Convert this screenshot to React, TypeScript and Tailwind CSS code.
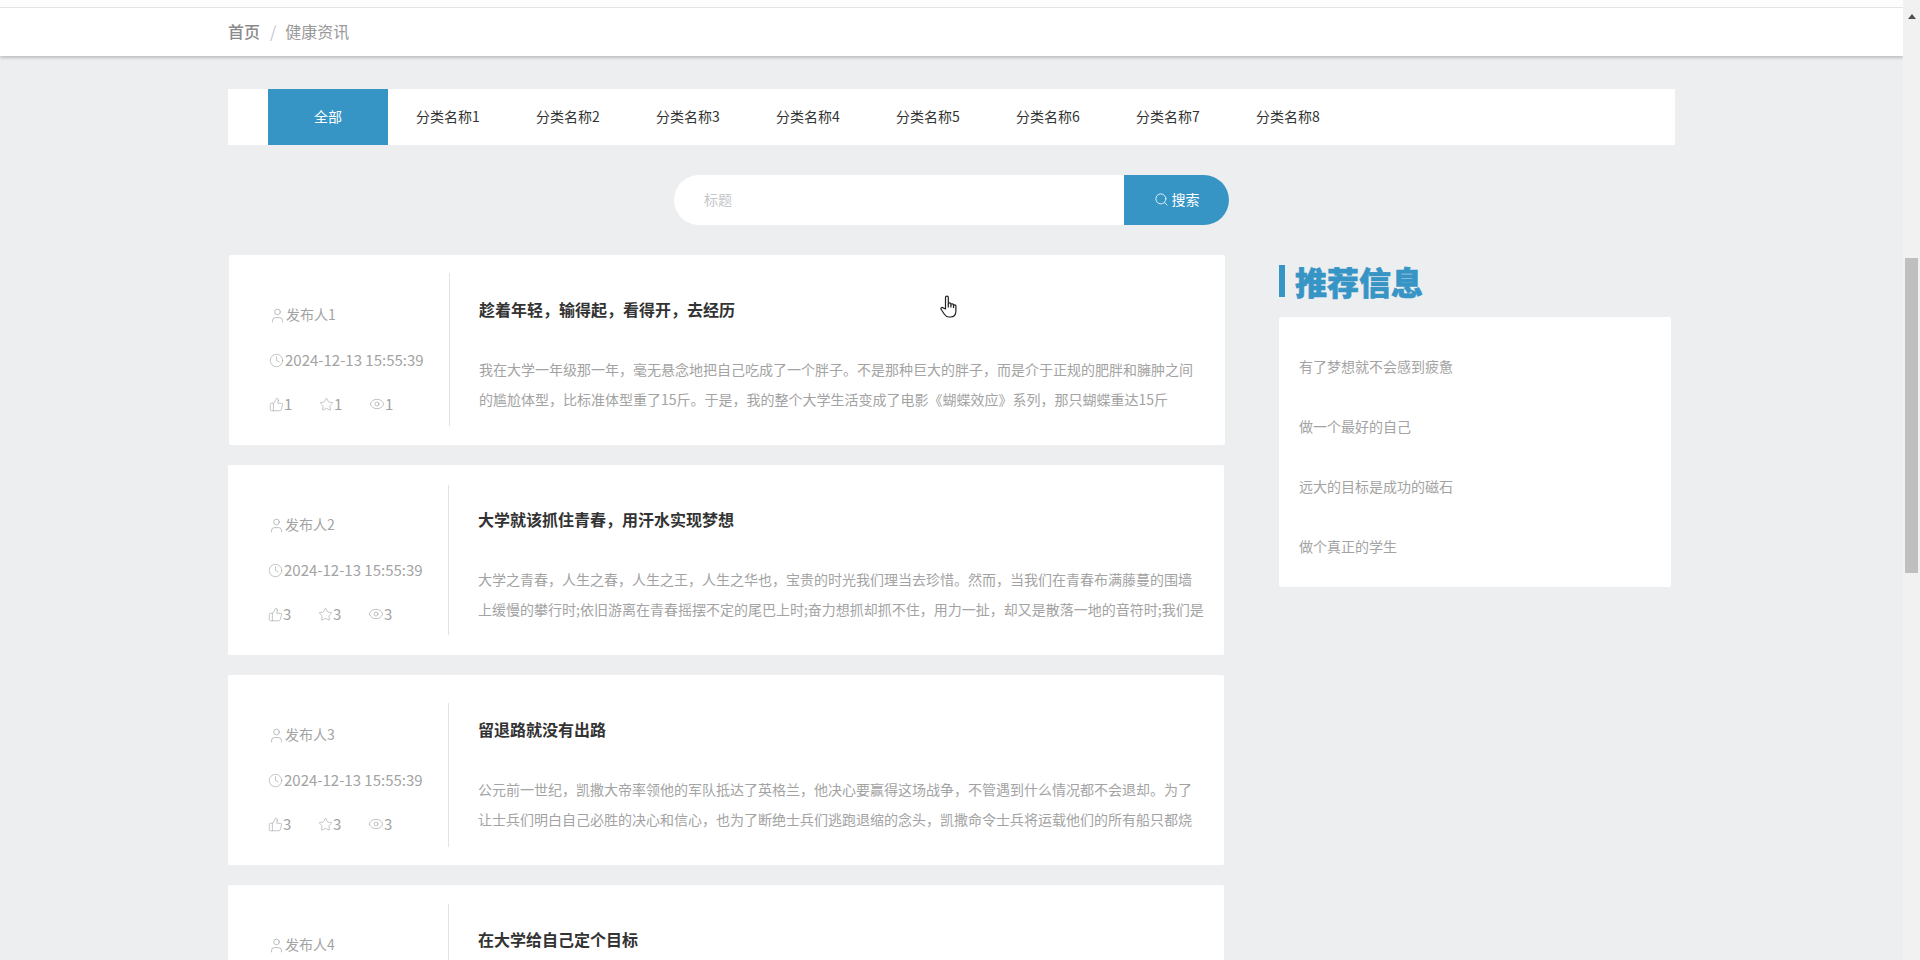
import React from "react";
import { User, Clock, ThumbsUp, Star, Eye, Search } from "lucide-react";

const tabs = ["分类名称1","分类名称2","分类名称3","分类名称4","分类名称5","分类名称6","分类名称7","分类名称8"];
const cards = [
  { n: 1, c: 1, shift: "ml-px", d: "mt-[18px] h-[153px]", t: "趁着年轻，输得起，看得开，去经历", a: "我在大学一年级那一年，毫无悬念地把自己吃成了一个胖子。不是那种巨大的胖子，而是介于正规的肥胖和臃肿之间", b: "的尴尬体型，比标准体型重了15斤。于是，我的整个大学生活变成了电影《蝴蝶效应》系列，那只蝴蝶重达15斤" },
  { n: 2, c: 3, shift: "", d: "mt-[20px] h-[150px]", t: "大学就该抓住青春，用汗水实现梦想", a: "大学之青春，人生之春，人生之王，人生之华也，宝贵的时光我们理当去珍惜。然而，当我们在青春布满藤蔓的围墙", b: "上缓慢的攀行时;依旧游离在青春摇摆不定的尾巴上时;奋力想抓却抓不住，用力一扯，却又是散落一地的音符时;我们是" },
  { n: 3, c: 3, shift: "", d: "mt-[28px] h-[144px]", t: "留退路就没有出路", a: "公元前一世纪，凯撒大帝率领他的军队抵达了英格兰，他决心要赢得这场战争，不管遇到什么情况都不会退却。为了", b: "让士兵们明白自己必胜的决心和信心，也为了断绝士兵们逃跑退缩的念头，凯撒命令士兵将运载他们的所有船只都烧" },
  { n: 4, c: 3, shift: "", d: "mt-[19px] h-[150px]", t: "在大学给自己定个目标", a: "", b: "" },
];
const side = ["有了梦想就不会感到疲惫","做一个最好的自己","远大的目标是成功的磁石","做个真正的学生"];
const font = { fontFamily: '"Noto Sans CJK SC", "Liberation Sans", sans-serif' };

function Stat({ icon, v, w }: { icon: React.ReactNode; v: number; w: string }) {
  return <span className={`flex items-center text-[15px] ${w}`}>{icon}<span>{v}</span></span>;
}

export default function App() {
  return (
    <div className="relative flex h-[960px] overflow-hidden bg-[#edeef0] text-[14px]" style={font}>
      <main className="flex-1 min-w-0">
        <div className="h-[8px] bg-[#fdfdfd] border-b border-[#e6e6e6]" />
        <div className="h-[48px] bg-white shadow-[0_2px_3px_rgba(0,0,0,0.2)] flex items-center pl-[228px] pb-[2px] text-[16px] leading-none">
          <span className="font-medium text-[#8a8a8a]">首页</span>
          <span className="ml-[10px] mr-[9px] text-[#c0c4cc]">/</span>
          <span className="text-[#999]">健康资讯</span>
        </div>
        <div className="mx-[228px] w-[1447px] mt-[33px] h-[56px] bg-white pl-[40px] flex">
          <div className="w-[120px] bg-[#3795c5] text-white flex items-center justify-center pb-[2px]">全部</div>
          {tabs.map(t => <div key={t} className="w-[120px] flex items-center justify-center text-[#333] pb-[2px]">{t}</div>)}
        </div>
        <div className="mt-[30px] ml-[674px] w-[555px] h-[50px] flex rounded-[25px] overflow-hidden bg-white">
          <div className="flex-1 pl-[30px] pb-[2px] flex items-center text-[#c4c6cb]">标题</div>
          <div className="w-[105px] bg-[#3795c5] text-white flex items-center justify-center gap-[3px] pb-[1px]">
            <Search size={15} strokeWidth={1.3} /><span className="pb-[1px]">搜索</span>
          </div>
        </div>
        <div className="mt-[30px] ml-[228px] flex">
          <div className="w-[997px] flex flex-col gap-[20px]">
            {cards.map(c => (
              <article key={c.n} className={`h-[190px] w-[996px] bg-white rounded-[2px] flex ${c.shift}`}>
                <div className="w-[220px] shrink-0 pl-[40px] pt-[50px] text-[#a3a3a3]">
                  <div className="h-[20px] flex items-center"><User size={17} strokeWidth={1} /><span className="pb-[1px]">发布人{c.n}</span></div>
                  <div className="h-[20px] mt-[25px] flex items-center gap-[1px] text-[15px]"><Clock size={15} strokeWidth={1} /><span>2024-12-13 15:55:39</span></div>
                  <div className="h-[20px] mt-[24px] flex items-center">
                    <Stat icon={<ThumbsUp size={15} strokeWidth={1} />} v={c.c} w="w-[50px]" />
                    <Stat icon={<Star size={15} strokeWidth={1} />} v={c.c} w="w-[50px]" />
                    <Stat icon={<Eye size={16} strokeWidth={1} />} v={c.c} w="" />
                  </div>
                </div>
                <div className={`w-px bg-[#e3e3e3] shrink-0 ${c.d}`} />
                <div className="flex-1 min-w-0 pl-[29px] pt-[42px]">
                  <h3 className="text-[16px] leading-[24px] font-bold text-[#333] whitespace-nowrap">{c.t}</h3>
                  {c.a && <p className="mt-[33px] text-[14px] leading-[30px] text-[#a3a3a3] whitespace-nowrap">{c.a}<br />{c.b}</p>}
                </div>
              </article>
            ))}
          </div>
          <aside className="ml-[54px] w-[392px] pt-[10px]">
            <div className="h-[32px] border-l-[6px] border-[#3795c5] pl-[10px] text-[32px] leading-[32px] font-black text-[#3795c5] [-webkit-text-stroke:0.6px_#3795c5]">推荐信息</div>
            <div className="mt-[20px] h-[270px] bg-white rounded-[2px] pl-[20px] pt-[19px] text-[#a3a3a3]">
              {side.map(s => <div key={s} className="h-[60px] flex items-center">{s}</div>)}
            </div>
          </aside>
        </div>
      </main>
      <div className="w-[17px] shrink-0 bg-[#f1f1f1] flex flex-col items-center">
        <div className="mt-[14px] w-0 h-0 border-x-[4px] border-x-transparent border-b-[5px] border-b-[#505050]" />
        <div className="mt-[239px] w-[13px] h-[315px] bg-[#bfbfbf]" />
      </div>
      <svg viewBox="0 0 18 23" width="18" height="23" className="absolute left-[940px] top-[295px]" fill="white" stroke="#222" strokeWidth="1.2" strokeLinejoin="round">
        <path d="M5.5 14V2.5a1.4 1.4 0 0 1 2.8 0V9a1.3 1.3 0 0 1 2.6.3v.7a1.3 1.3 0 0 1 2.6.2v.8a1.2 1.2 0 0 1 2.4.3V16c0 3.5-2 6-5.5 6h-1.5c-2.5 0-3.5-1.2-4.7-3L1.2 14.5c-.9-1.4.8-2.7 1.9-1.6z" />
        <path d="M8.3 9v3.5M10.9 10v2.5M13.5 11v2" fill="none" />
      </svg>
    </div>
  );
}
